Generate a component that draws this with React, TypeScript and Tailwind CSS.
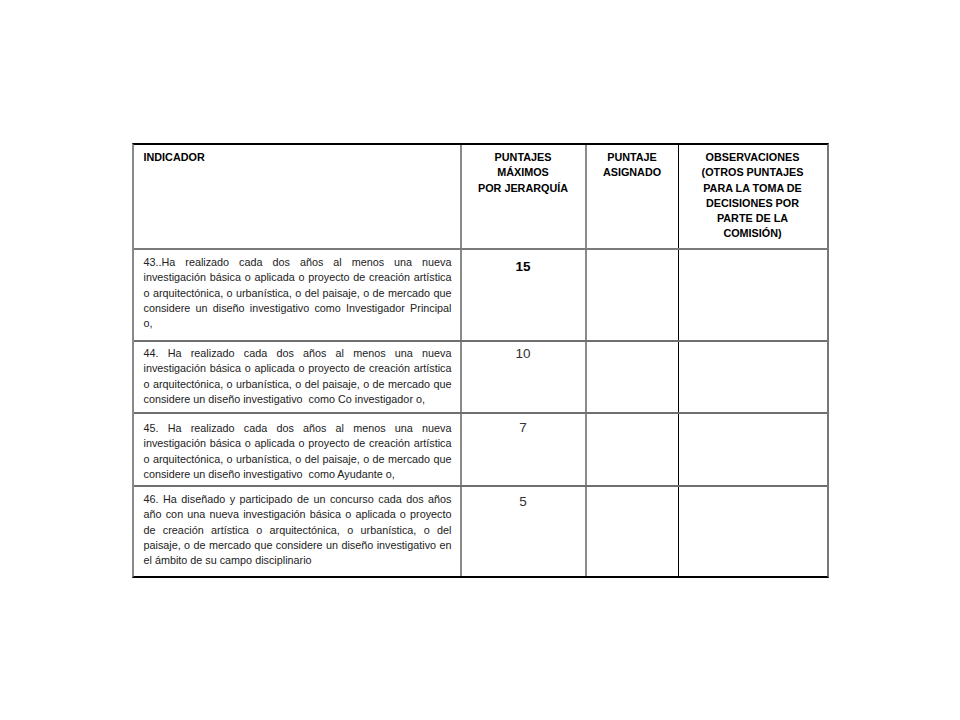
import React from "react";

type Fila = {
  lineas: string[];
  ultimaJustificada?: boolean;
  puntaje: string;
  negrita?: boolean;
  alto: string;
  ptTexto: string;
  ptPuntaje: string;
  borde: boolean;
};

const filas: Fila[] = [
  {
    lineas: [
      "43..Ha realizado cada dos años al menos una nueva",
      "investigación básica o aplicada o proyecto de creación artística",
      "o arquitectónica, o urbanística, o del paisaje, o de mercado que",
      "considere un diseño investigativo como Investigador Principal",
      "o,",
    ],
    puntaje: "15",
    negrita: true,
    alto: "h-[92px]",
    ptTexto: "pt-[5px]",
    ptPuntaje: "pt-[9px]",
    borde: true,
  },
  {
    lineas: [
      "44. Ha realizado cada dos años al menos una nueva",
      "investigación básica o aplicada o proyecto de creación artística",
      "o arquitectónica, o urbanística, o del paisaje, o de mercado que",
      "considere un diseño investigativo  como Co investigador o,",
    ],
    puntaje: "10",
    alto: "h-[72px]",
    ptTexto: "pt-[4px]",
    ptPuntaje: "pt-[4px]",
    borde: true,
  },
  {
    lineas: [
      "45. Ha realizado cada dos años al menos una nueva",
      "investigación básica o aplicada o proyecto de creación artística",
      "o arquitectónica, o urbanística, o del paisaje, o de mercado que",
      "considere un diseño investigativo  como Ayudante o,",
    ],
    puntaje: "7",
    alto: "h-[73px]",
    ptTexto: "pt-[7px]",
    ptPuntaje: "pt-[6px]",
    borde: true,
  },
  {
    lineas: [
      "46. Ha diseñado y participado de un concurso cada dos años",
      "año con una nueva investigación básica o aplicada o proyecto",
      "de creación artística o arquitectónica, o urbanística, o del",
      "paisaje, o de mercado que considere un diseño investigativo en",
      "el ámbito de su campo disciplinario",
    ],
    puntaje: "5",
    alto: "h-[89px]",
    ptTexto: "pt-[5px]",
    ptPuntaje: "pt-[7px]",
    borde: false,
  },
];

const columnas = "grid grid-cols-[328px_125px_92px_148px]";

export default function App() {
  return (
    <div className="min-h-[720px] w-full bg-white pt-[143px] font-['Liberation_Sans',Arial,sans-serif]">
      <div className="mx-auto w-[697px] border-t-2 border-b-2 border-l-2 border-r-2 border-t-black border-b-black border-l-[#8a8a8a] border-r-[#777]">
        {/* encabezado */}
        <div className={`${columnas} h-[105px] border-b-2 border-[#7a7a7a] text-[10.8px] font-bold leading-[15.3px] text-black`}>
          <div className="border-r-2 border-[#8a8a8a] pl-[10px] pt-[5px]">INDICADOR</div>
          <div className="border-r-2 border-[#8a8a8a] pt-[5px] text-center">
            PUNTAJES
            <br />
            MÁXIMOS
            <br />
            POR JERARQUÍA
          </div>
          <div className="border-r border-black pt-[5px] text-center">
            PUNTAJE
            <br />
            ASIGNADO
          </div>
          <div className="pt-[5px] text-center">
            OBSERVACIONES
            <br />
            (OTROS PUNTAJES
            <br />
            PARA LA TOMA DE
            <br />
            DECISIONES POR
            <br />
            PARTE DE LA
            <br />
            COMISIÓN)
          </div>
        </div>

        {filas.map((fila, i) => (
          <div
            key={i}
            className={`${columnas} ${fila.alto} ${fila.borde ? "border-b-2 border-[#6f6f6f]" : ""}`}
          >
            <div
              className={`border-r-2 border-[#8a8a8a] pl-[10px] pr-[8px] ${fila.ptTexto} text-[10.8px] leading-[15.3px] text-[#222]`}
            >
              {fila.lineas.map((l, j) => (
                <div
                  key={j}
                  className={`whitespace-pre ${
                    j < fila.lineas.length - 1 ? "text-justify [text-align-last:justify]" : ""
                  }`}
                >
                  {l}
                </div>
              ))}
            </div>
            <div
              className={`border-r-2 border-[#8a8a8a] ${fila.ptPuntaje} text-center text-[13.5px] leading-[16px] ${
                fila.negrita ? "font-bold text-black" : "text-[#333]"
              }`}
            >
              {fila.puntaje}
            </div>
            <div className="border-r border-black" />
            <div />
          </div>
        ))}
      </div>
    </div>
  );
}
